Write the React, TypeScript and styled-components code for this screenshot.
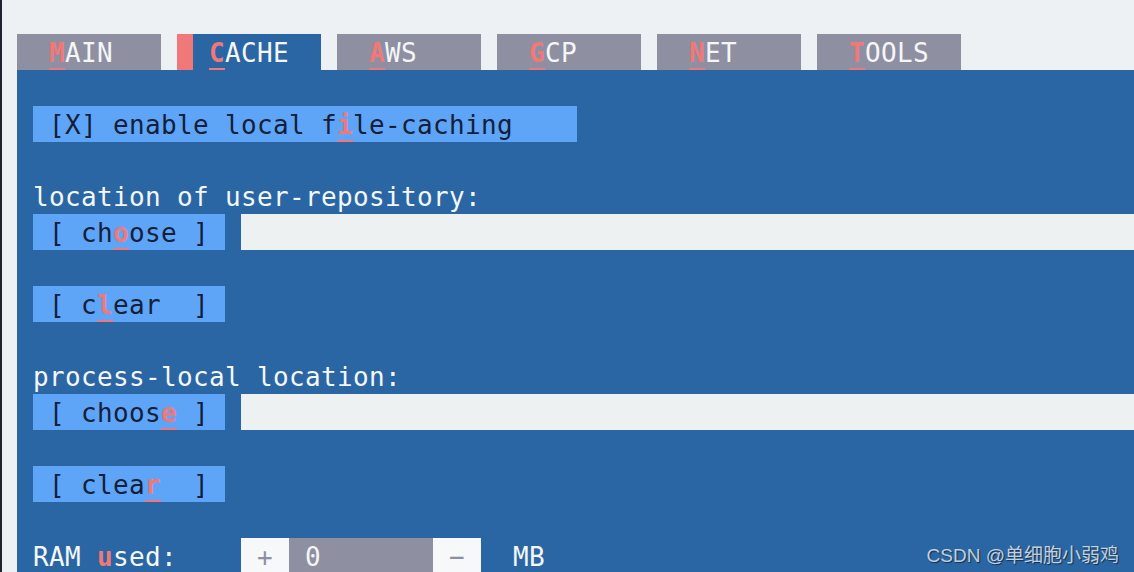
import React from "react";
import styled, { createGlobalStyle } from "styled-components";

const C = {
  page: "#edf1f3",
  edge: "#1f2330",
  blue: "#2966a3",
  grey: "#8e90a2",
  light: "#5ea5f8",
  red: "#f07878",
  ink: "#13203a",
  white: "#f4f6f8",
  field: "#edf1f2",
  btn: "#f7f8fa",
};

const CELL = 16;
const ROW = 36;

const GlobalStyle = createGlobalStyle`
  html, body { margin: 0; padding: 0; background: ${C.page}; overflow: hidden; }
  body {
    font-family: "DejaVu Sans Mono", "Liberation Mono", monospace;
    font-size: 26px;
    letter-spacing: 0.35px;
  }
`;

const Screen = styled.div`
  position: relative;
  box-sizing: border-box;
  height: 572px;
  width: 1134px;
  border-left: 2px solid ${C.edge};
  padding: 34px 0 0 15px;
  display: flex;
  flex-direction: column;
`;

const TabBar = styled.div`
  display: flex;
  gap: ${CELL}px;
  height: ${ROW}px;
`;

const Tab = styled.div<{ $active?: boolean }>`
  width: ${CELL * 9}px;
  height: ${ROW}px;
  display: flex;
  background: ${(p) => (p.$active ? C.blue : C.grey)};
  color: ${C.white};
  line-height: 39px;
  white-space: pre;
`;

const TabMarker = styled.span`
  width: ${CELL}px;
  flex: none;
  background: ${C.red};
`;

const TabText = styled.span`
  white-space: pre;
`;

const Panel = styled.div`
  flex: 1;
  background: ${C.blue};
  padding-left: ${CELL}px;
  display: flex;
  flex-direction: column;
  color: ${C.white};
`;

const Row = styled.div`
  height: ${ROW}px;
  flex: none;
  display: flex;
  gap: ${CELL}px;
  line-height: 39px;
  white-space: pre;
`;

const Blank = styled.div`
  height: ${ROW}px;
  flex: none;
`;

const Button = styled.div<{ $cells: number }>`
  width: ${(p) => p.$cells * CELL}px;
  flex: none;
  background: ${C.light};
  color: ${C.ink};
`;

const Field = styled.div`
  flex: 1;
  background: ${C.field};
`;

const Hot = styled.span`
  color: ${C.red};
  font-weight: bold;
  text-decoration: underline;
  text-decoration-thickness: 2px;
  text-underline-offset: 6px;
`;

const Spinner = styled.div`
  display: flex;
`;

const SpinBtn = styled.div`
  width: ${CELL * 3}px;
  background: ${C.btn};
  color: ${C.grey};
`;

const SpinValue = styled.div`
  width: ${CELL * 9}px;
  background: ${C.grey};
  color: ${C.white};
`;

const Label = styled.div<{ $cells?: number }>`
  width: ${(p) => (p.$cells ? `${p.$cells * CELL}px` : "auto")};
  flex: none;
`;

const Watermark = styled.div`
  position: absolute;
  right: 15px;
  bottom: 5px;
  font-family: "Liberation Sans", "Noto Sans CJK SC", sans-serif;
  font-size: 19px;
  letter-spacing: 0;
  color: rgba(225, 232, 240, 0.85);
  text-shadow: 1px 1px 1px rgba(0, 0, 0, 0.55);
`;

const tabs = [
  { hot: "M", rest: "AIN" },
  { hot: "C", rest: "ACHE", active: true },
  { hot: "A", rest: "WS" },
  { hot: "G", rest: "CP" },
  { hot: "N", rest: "ET" },
  { hot: "T", rest: "OOLS" },
];

export default function App() {
  return (
    <>
      <GlobalStyle />
      <Screen>
        <TabBar>
          {tabs.map((t) =>
            t.active ? (
              <Tab key={t.hot} $active>
                <TabMarker />
                <TabText>
                  {" "}
                  <Hot>{t.hot}</Hot>
                  {t.rest}
                </TabText>
              </Tab>
            ) : (
              <Tab key={t.hot}>
                <TabText>
                  {"  "}
                  <Hot>{t.hot}</Hot>
                  {t.rest}
                </TabText>
              </Tab>
            )
          )}
        </TabBar>
        <Panel>
          <Blank />
          <Row>
            <Button $cells={34}>
              {" [X] enable local f"}
              <Hot>i</Hot>
              {"le-caching"}
            </Button>
          </Row>
          <Blank />
          <Row>location of user-repository:</Row>
          <Row>
            <Button $cells={12}>
              {" [ ch"}
              <Hot>o</Hot>
              {"ose ]"}
            </Button>
            <Field />
          </Row>
          <Blank />
          <Row>
            <Button $cells={12}>
              {" [ c"}
              <Hot>l</Hot>
              {"ear  ]"}
            </Button>
          </Row>
          <Blank />
          <Row>process-local location:</Row>
          <Row>
            <Button $cells={12}>
              {" [ choos"}
              <Hot>e</Hot>
              {" ]"}
            </Button>
            <Field />
          </Row>
          <Blank />
          <Row>
            <Button $cells={12}>
              {" [ clea"}
              <Hot>r</Hot>
              {"  ]"}
            </Button>
          </Row>
          <Blank />
          <Row>
            <Label $cells={12}>
              {"RAM "}
              <Hot>u</Hot>
              {"sed:"}
            </Label>
            <Spinner>
              <SpinBtn>{" + "}</SpinBtn>
              <SpinValue>{" 0"}</SpinValue>
              <SpinBtn>{" − "}</SpinBtn>
            </Spinner>
            <Label>{" MB"}</Label>
          </Row>
        </Panel>
        <Watermark>CSDN @单细胞小弱鸡</Watermark>
      </Screen>
    </>
  );
}
